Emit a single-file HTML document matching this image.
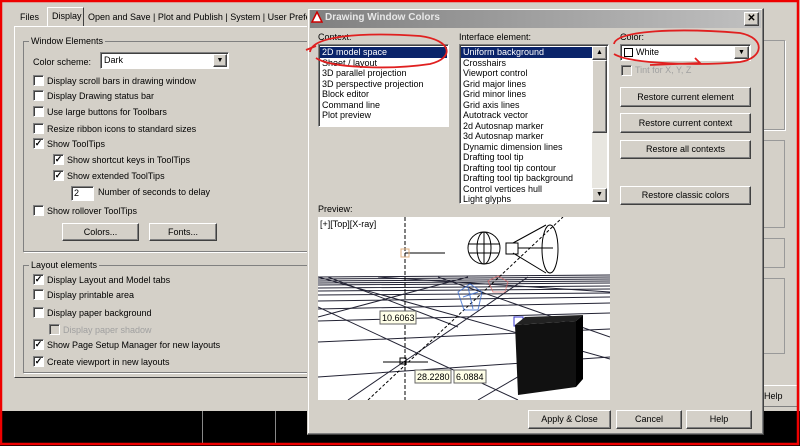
<!DOCTYPE html>
<html><head><style>
*{margin:0;padding:0;box-sizing:border-box}
body{width:800px;height:446px;overflow:hidden;background:#d4d0c8;font-family:"Liberation Sans",sans-serif;font-size:9px;color:#000;position:relative}
.a{position:absolute}
.t{position:absolute;white-space:nowrap;font-size:9px;line-height:12px}
.cb{position:absolute;width:11px;height:11px;background:#fff;border:1px solid #808080;border-right-color:#fff;border-bottom-color:#fff;box-shadow:inset 1px 1px 0 #404040;font-size:9px;line-height:9px;text-align:center;font-weight:bold}
.grp{position:absolute;border:1px solid #808080;box-shadow:1px 1px 0 #fff}
.btn{position:absolute;background:#d4d0c8;border:1px solid #fff;border-right-color:#404040;border-bottom-color:#404040;box-shadow:inset -1px -1px 0 #808080;text-align:center;font-size:9px}
.lst{position:absolute;background:#fff;border:1px solid #808080;border-right-color:#fff;border-bottom-color:#fff;box-shadow:inset 1px 1px 0 #404040}
.lst div{height:10.5px;line-height:10.5px;padding-left:2px;white-space:nowrap;font-size:9px}
.sel{background:#0a246a;color:#fff}
</style></head><body>
<div class="t" style="left:20px;top:11px">Files</div>
<div class="a" style="left:47px;top:7px;width:37px;height:19px;border:1px solid #fff;border-bottom:none;border-right-color:#404040"></div>
<div class="t" style="left:52px;top:10px">Display</div>
<div class="t" style="left:88px;top:11px">Open and Save | Plot and Publish | System | User Prefere</div>
<div class="a" style="left:14px;top:26px;width:300px;height:352px;border:1px solid #fff;border-right-color:#404040;border-bottom-color:#404040"></div>
<div class="grp" style="left:23px;top:41px;width:290px;height:211px"></div>
<div class="t" style="left:29px;top:35px;background:#d4d0c8;padding:0 2px">Window Elements</div>
<div class="t" style="left:33px;top:56px">Color scheme:</div>
<div class="lst" style="left:100px;top:52px;width:129px;height:17px"><div style="padding-left:3px;line-height:14px">Dark</div></div>
<div class="btn" style="left:213px;top:54px;width:14px;height:13px;font-size:7px;line-height:11px">▼</div>
<div class="cb" style="left:33px;top:75px"></div><div class="t" style="left:47px;top:75px">Display scroll bars in drawing window</div>
<div class="cb" style="left:33px;top:90px"></div><div class="t" style="left:47px;top:90px">Display Drawing status bar</div>
<div class="cb" style="left:33px;top:106px"></div><div class="t" style="left:47px;top:106px">Use large buttons for Toolbars</div>
<div class="cb" style="left:33px;top:123px"></div><div class="t" style="left:47px;top:123px">Resize ribbon icons to standard sizes</div>
<div class="cb" style="left:33px;top:138px">✓</div><div class="t" style="left:47px;top:138px">Show ToolTips</div>
<div class="cb" style="left:53px;top:154px">✓</div><div class="t" style="left:67px;top:154px">Show shortcut keys in ToolTips</div>
<div class="cb" style="left:53px;top:170px">✓</div><div class="t" style="left:67px;top:170px">Show extended ToolTips</div>
<div class="lst" style="left:71px;top:186px;width:23px;height:15px"><div style="line-height:13px">2</div></div>
<div class="t" style="left:98px;top:186px">Number of seconds to delay</div>
<div class="cb" style="left:33px;top:205px"></div><div class="t" style="left:47px;top:205px">Show rollover ToolTips</div>
<div class="btn" style="left:62px;top:223px;width:77px;height:18px;line-height:16px">Colors...</div>
<div class="btn" style="left:149px;top:223px;width:68px;height:18px;line-height:16px">Fonts...</div>
<div class="grp" style="left:23px;top:265px;width:290px;height:108px"></div>
<div class="t" style="left:29px;top:259px;background:#d4d0c8;padding:0 2px">Layout elements</div>
<div class="cb" style="left:33px;top:274px">✓</div><div class="t" style="left:47px;top:274px">Display Layout and Model tabs</div>
<div class="cb" style="left:33px;top:289px"></div><div class="t" style="left:47px;top:289px">Display printable area</div>
<div class="cb" style="left:33px;top:307px"></div><div class="t" style="left:47px;top:307px">Display paper background</div>
<div class="cb" style="left:49px;top:324px;background:#d4d0c8"></div><div class="t" style="left:63px;top:324px;color:#a0a0a0">Display paper shadow</div>
<div class="cb" style="left:33px;top:339px">✓</div><div class="t" style="left:47px;top:339px">Show Page Setup Manager for new layouts</div>
<div class="cb" style="left:33px;top:356px">✓</div><div class="t" style="left:47px;top:356px">Create viewport in new layouts</div>
<div class="a" style="left:763px;top:40px;width:22px;height:90px;border:1px solid #999;box-shadow:1px 1px 0 #fff"></div>
<div class="a" style="left:763px;top:140px;width:22px;height:88px;border:1px solid #999"></div>
<div class="a" style="left:763px;top:238px;width:22px;height:30px;border:1px solid #999"></div>
<div class="a" style="left:763px;top:278px;width:22px;height:76px;border:1px solid #999"></div>
<div class="a" style="left:763px;top:385px;width:36px;height:22px;border-top:1px solid #fff;border-bottom:1px solid #808080"></div>
<div class="t" style="left:764px;top:390px">Help</div>
<div class="a" style="left:0;top:411px;width:800px;height:35px;background:#000"></div>
<div class="a" style="left:202px;top:411px;width:1px;height:33px;background:#888"></div>
<div class="a" style="left:275px;top:411px;width:1px;height:33px;background:#888"></div>
<div class="a" style="left:307px;top:8px;width:457px;height:427px;background:#d4d0c8;border:1px solid #d4d0c8;border-right-color:#404040;border-bottom-color:#404040;box-shadow:inset -1px -1px 0 #808080,inset 1px 1px 0 #fff"></div>
<div class="a" style="left:310px;top:10px;width:451px;height:18px;background:linear-gradient(90deg,#808080,#c0c0c0)"></div>
<div class="a" style="left:311px;top:11px;width:12px;height:12px"><svg width="12" height="12"><path d="M1 11 L6 1 L11 11 Z" fill="#fff" stroke="#c00" stroke-width="1.5"/></svg></div>
<div class="t" style="left:325px;top:12px;color:#e8e8e8;font-weight:bold;font-size:10px">Drawing Window Colors</div>
<div class="btn" style="left:744px;top:12px;width:15px;height:14px;font-size:10px;line-height:12px;font-weight:bold">✕</div>
<div class="t" style="left:318px;top:31px">Context:</div>
<div class="lst" style="left:318px;top:44px;width:131px;height:83px;padding:2px 1px">
<div class="sel">2D model space</div><div>Sheet / layout</div><div>3D parallel projection</div><div>3D perspective projection</div><div>Block editor</div><div>Command line</div><div>Plot preview</div></div>
<div class="t" style="left:459px;top:31px">Interface element:</div>
<div class="lst" style="left:459px;top:44px;width:150px;height:160px;padding:2px 1px">
<div class="sel" style="width:131px">Uniform background</div><div>Crosshairs</div><div>Viewport control</div><div>Grid major lines</div><div>Grid minor lines</div><div>Grid axis lines</div><div>Autotrack vector</div><div>2d Autosnap marker</div><div>3d Autosnap marker</div><div>Dynamic dimension lines</div><div>Drafting tool tip</div><div>Drafting tool tip contour</div><div>Drafting tool tip background</div><div>Control vertices hull</div><div>Light glyphs</div></div>
<div class="a" style="left:592px;top:46px;width:15px;height:156px;background:#e8e6e0"></div>
<div class="btn" style="left:592px;top:46px;width:15px;height:14px;font-size:7px;line-height:12px">▲</div>
<div class="btn" style="left:592px;top:60px;width:15px;height:73px"></div>
<div class="btn" style="left:592px;top:188px;width:15px;height:14px;font-size:7px;line-height:12px">▼</div>
<div class="t" style="left:620px;top:31px">Color:</div>
<div class="lst" style="left:620px;top:44px;width:131px;height:17px"></div>
<div class="a" style="left:624px;top:48px;width:9px;height:9px;border:1px solid #000;background:#fff"></div>
<div class="t" style="left:636px;top:46px">White</div>
<div class="btn" style="left:734px;top:46px;width:15px;height:13px;font-size:7px;line-height:11px">▼</div>
<div class="cb" style="left:621px;top:65px;background:#d4d0c8"></div><div class="t" style="left:635px;top:64px;color:#a0a0a0">Tint for X, Y, Z</div>
<div class="btn" style="left:620px;top:87px;width:131px;height:20px;line-height:18px">Restore current element</div>
<div class="btn" style="left:620px;top:113px;width:131px;height:20px;line-height:18px">Restore current context</div>
<div class="btn" style="left:620px;top:140px;width:131px;height:19px;line-height:17px">Restore all contexts</div>
<div class="btn" style="left:620px;top:186px;width:131px;height:19px;line-height:17px">Restore classic colors</div>
<div class="t" style="left:318px;top:203px">Preview:</div>
<svg class="a" style="left:318px;top:217px" width="292" height="183" viewBox="0 0 292 183">
<rect width="292" height="183" fill="#fff"/>
<g stroke="#223" stroke-width="1" fill="none">
<path d="M0 60 L292 58 M0 62 L292 60 M0 64 L292 62 M0 66 L292 64 M0 68 L292 66 M0 71 L292 69 M0 74 L292 72 M0 78 L292 76 M0 84 L292 80 M0 92 L292 86 M0 104 L292 96 M0 125 L292 112 M0 160 L292 140"/>
<path d="M0 60 L292 142 M0 90 L200 183 M10 60 L140 110 M60 60 L292 75 M150 60 L0 100 M210 60 L30 183 M260 125 L160 183 M120 60 L292 120"/>
</g>
<text x="2" y="10" font-size="9" font-family="Liberation Sans">[+][Top][X-ray]</text>
<path d="M87 0 V183" stroke="#000" stroke-dasharray="4 2"/>
<path d="M50 183 L245 0" stroke="#000" stroke-dasharray="3 2"/>
<path d="M87 36 H127 M65 145 H110" stroke="#000"/>
<rect x="83" y="32" width="8" height="8" fill="none" stroke="#e0b080"/>
<g stroke="#000" fill="none"><circle cx="166" cy="31" r="16"/><ellipse cx="166" cy="31" rx="7" ry="16"/><path d="M150 27 H182 M151 36 H181 M166 15 V47"/>
<path d="M195 26 L228 8 M195 36 L228 56 M188 26 H200 V37 H188 Z"/><ellipse cx="232" cy="32" rx="8" ry="24"/><path d="M200 31 H235"/></g>
<g stroke="#36c" fill="none" opacity=".8"><path d="M140 75 l12 -8 l12 8 l-4 18 l-14 0 z M145 80 l15 -5 M150 70 l5 22"/></g>
<g stroke="#d66" fill="none" opacity=".7"><path d="M170 64 l10 -5 l10 6 l-3 10 l-12 0 z"/></g>
<rect x="196" y="100" width="9" height="9" fill="none" stroke="#33c"/>
<path d="M197 108 L258 104 L258 170 L200 178 Z" fill="#111"/><path d="M197 108 L207 100 L265 98 L258 104Z" fill="#222"/><path d="M258 104 L265 98 L265 162 L258 170Z" fill="#000"/>
<rect x="62" y="94" width="36" height="13" fill="#ffffe8" stroke="#666"/><text x="64" y="104" font-size="9" font-family="Liberation Sans">10.6063</text>
<rect x="82" y="141" width="6" height="6" fill="none" stroke="#000"/>
<rect x="97" y="153" width="36" height="13" fill="#ffffe8" stroke="#666"/><text x="99" y="163" font-size="9" font-family="Liberation Sans">28.2280</text>
<rect x="136" y="153" width="32" height="13" fill="#ffffe8" stroke="#666"/><text x="138" y="163" font-size="9" font-family="Liberation Sans">6.0884</text>
</svg>
<div class="btn" style="left:528px;top:410px;width:83px;height:19px;line-height:17px">Apply &amp; Close</div>
<div class="btn" style="left:616px;top:410px;width:66px;height:19px;line-height:17px">Cancel</div>
<div class="btn" style="left:686px;top:410px;width:66px;height:19px;line-height:17px">Help</div>
<svg class="a" style="left:0;top:0" width="800" height="446">
<rect x="1" y="1" width="797" height="443" fill="none" stroke="#e00" stroke-width="2.5"/>
<path d="M310 52 C312 36 360 32 420 36 C452 40 455 58 430 64 C390 70 330 68 316 58 M306 50 L316 46" fill="none" stroke="#e02020" stroke-width="1.8"/>
<path d="M614 44 C616 30 680 28 740 33 C766 38 764 58 740 62 C700 66 630 64 614 54 M650 65 L700 63 L695 58" fill="none" stroke="#e02020" stroke-width="1.8"/>
</svg>
</body></html>
